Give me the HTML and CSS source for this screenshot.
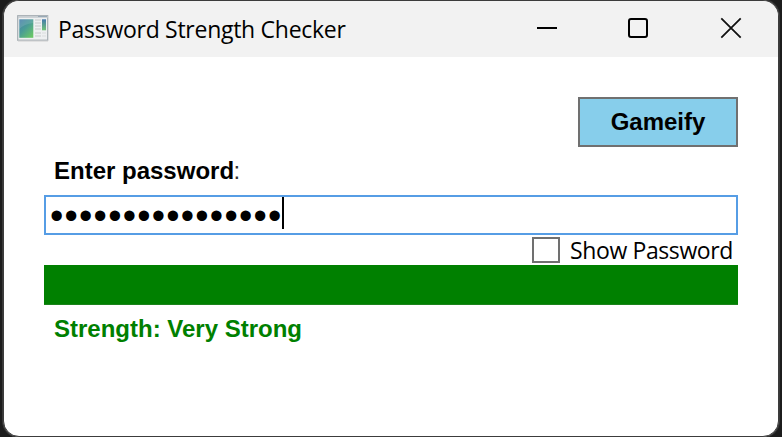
FILE: index.html
```html
<!DOCTYPE html>
<html lang="en">
<head>
<meta charset="utf-8">
<title>Password Strength Checker</title>
<link rel="stylesheet" href="styles.css">
</head>
<body>
<main class="window">
  <header class="titlebar">
    <svg class="app-icon" width="32" height="27" viewBox="0 0 32 27">
      <defs>
        <linearGradient id="pane" x1="0" y1="0" x2=".8" y2="1"><stop offset="0" stop-color="#477fac"/><stop offset=".5" stop-color="#4a9c96"/><stop offset="1" stop-color="#68c667"/></linearGradient>
        <linearGradient id="side" x1="0" y1="0" x2="0" y2="1"><stop offset="0" stop-color="#4479ad"/><stop offset="1" stop-color="#72c477"/></linearGradient>
      </defs>
      <rect x=".7" y=".7" width="30" height="24.5" fill="#eef0f1" stroke="#a5adb2" stroke-width="1.2"/>
      <path d="M1 2H31" stroke="#c2c9cd" stroke-width="1.5"/>
      <path d="M21 1.5H30" stroke="#98a9b5"/>
      <rect x="2.3" y="4.3" width="14" height="18.5" fill="url(#pane)"/>
      <path d="M2.3 4.3H16.3V8Q7 9 2.3 14Z" fill="#fff" opacity=".12"/>
      <path d="M18 5H24M18 8H24M18 11H24M18 14H24M18 18H24M18 21H24" stroke="#c6c9cb" stroke-width="1.2"/>
      <rect x="25" y="4.3" width="4" height="11" fill="url(#side)"/>
      <path d="M25 18H29M25 21H29" stroke="#dadddd"/>
      <path d="M1 26.2H31" stroke="#d8d8d8"/>
    </svg>
    <h1 class="title">Password Strength Checker</h1>
    <nav class="controls">
      <svg width="22" height="22" viewBox="0 0 22 22"><path d="M1 11H21" stroke="#000" stroke-width="2"/></svg>
      <svg width="22" height="22" viewBox="0 0 22 22"><rect x="1" y="2" width="18" height="18" rx="2" fill="none" stroke="#000" stroke-width="2"/></svg>
      <svg width="22" height="22" viewBox="0 0 22 22"><path d="M1.3 1.3L20.7 20.7M20.7 1.3L1.3 20.7" stroke="#111" stroke-width="1.8"/></svg>
    </nav>
  </header>
  <section class="content">
    <button class="gameify">Gameify</button>
    <div class="prompt"><b>Enter password</b><span class="colon">:</span></div>
    <div class="field"><span class="dots">••••••••••••••••</span><span class="caret"></span></div>
    <label class="show"><span class="box"></span><span class="show-text">Show Password</span></label>
    <div class="meter"></div>
    <div class="strength">Strength: Very Strong</div>
  </section>
</main>
</body>
</html>
```
FILE: styles.css
```css
* { box-sizing: border-box; }
body {
  margin: 0;
  height: 437px;
  padding: 0 3px;
  overflow: hidden;
  background: #1c1c1c;
  font-family: "Liberation Sans", Arial, sans-serif;
  color: #000;
}
.window {
  height: 437px;
  border: 1px solid #3c3c3c;
  border-radius: 16px;
  box-shadow: 0 0 0 1px #383838;
  background: #fff;
  overflow: hidden;
}
.titlebar {
  height: 56px;
  display: flex;
  align-items: center;
  padding: 0 36px 0 13px;
  background: #f2f2f2;
}
.app-icon { flex: none; margin-bottom: 1px; }
.title {
  margin: 0 0 0 9px;
  font: 400 23px/30px "Open Sans", "Noto Sans", sans-serif;
  letter-spacing: -0.28px;
  white-space: nowrap;
}
.controls { display: flex; gap: 70px; margin: 0 0 2px auto; }
.controls svg { display: block; }
.content {
  display: flex;
  flex-direction: column;
  padding: 40px 40px 0;
}
.gameify {
  align-self: flex-end;
  width: 160px;
  height: 50px;
  padding: 0;
  border: 2px solid #707070;
  background: #87ceeb;
  color: #000;
  font: bold 24px/46px "Liberation Sans", Arial, sans-serif;
}
.prompt { height: 48px; padding: 10px 10px 0; font-size: 24px; line-height: 28px; }
.colon { margin-left: -0.5px; color: #333; }
.field {
  height: 40px;
  display: flex;
  padding-left: 4px;
  border: 2px solid #569de5;
}
.dots { height: 36px; font-size: 38px; line-height: 39px; letter-spacing: 1.23px; }
.caret { width: 2px; height: 32px; margin-left: -1px; background: #000; }
.show {
  height: 30px;
  display: flex;
  align-self: flex-end;
  padding: 2px 5px 0 0;
}
.box { width: 28px; height: 26px; border: 2px solid #707070; }
.show-text {
  margin-left: 10px;
  font: 400 23px/26px "Open Sans", "Noto Sans", sans-serif;
  letter-spacing: -0.39px;
  white-space: nowrap;
}
.meter { height: 40px; background: #008000; border-bottom: 1px solid #1c831c; }
.strength { padding: 10px; color: #008000; font-size: 24px; font-weight: bold; line-height: 28px; }
```
